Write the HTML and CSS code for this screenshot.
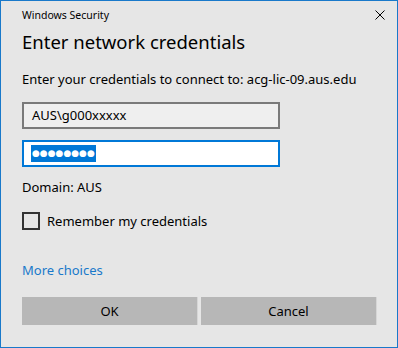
FILE: index.html
```html
<!DOCTYPE html>
<html>
<head>
<meta charset="utf-8">
<link rel="stylesheet" href="styles.css">
</head>
<body>
<div class="window">
  <div class="titlebar">
    <span class="caption">Windows Security</span>
    <svg class="close" width="10" height="10" viewBox="0 0 10 10"><path d="M0.5 0.5 L9.5 9.5 M9.5 0.5 L0.5 9.5" stroke="#000" stroke-width="1" fill="none"/></svg>
  </div>
  <div class="title">Enter network credentials</div>
  <div class="prompt">Enter your credentials to connect to: acg-lic-09.aus.edu</div>
  <div class="field user">AUS\g000xxxxx</div>
  <div class="field pass"><span class="sel">●●●●●●●●</span></div>
  <div class="domain">Domain: AUS</div>
  <label class="check-row"><span class="box"></span><span>Remember my credentials</span></label>
  <a class="more">More choices</a>
  <div class="buttons">
    <div class="btn">OK</div>
    <div class="btn">Cancel</div>
  </div>
</div>
</body>
</html>
```

FILE: styles.css
```css
html, body {
  margin: 0;
  padding: 0;
}
body {
  font-family: "Segoe UI", "Noto Sans", sans-serif;
  color: #000;
}
.window {
  width: 398px;
  height: 348px;
  box-sizing: border-box;
  border: 1px solid #1979CA;
  background: #E6E6E6;
  padding: 0 20px 0 21px;
  display: flex;
  flex-direction: column;
}
.titlebar {
  height: 28px;
  display: flex;
  align-items: center;
  justify-content: space-between;
  margin-right: -8px;
}
.caption {
  font-size: 10.5px;
  line-height: 14px;
}
.close {
  display: block;
}
.title {
  font-size: 18.5px;
  line-height: 26px;
}
.prompt {
  margin-top: 15px;
  font-size: 13px;
  line-height: 18px;
}
.field {
  width: 258px;
  height: 27px;
  box-sizing: border-box;
  border: 2px solid #7A7A7A;
  background: #EFEFEF;
  font-size: 13px;
  line-height: 23px;
  padding-left: 8px;
}
.user {
  margin-top: 14px;
}
.pass {
  margin-top: 11px;
  border-color: #0078D7;
  background: #fff;
  padding-left: 7px;
  display: flex;
  align-items: center;
}
.sel {
  background: #0078D7;
  color: #fff;
  font-family: "DejaVu Sans", sans-serif;
  font-size: 9px;
  line-height: 17px;
  letter-spacing: 0;
  padding: 0 1px;
}
.domain {
  margin-top: 11px;
  font-size: 13px;
  line-height: 18px;
}
.check-row {
  margin-top: 16px;
  display: flex;
  align-items: center;
  gap: 7px;
  font-size: 13px;
  line-height: 18px;
}
.box {
  width: 18px;
  height: 18px;
  box-sizing: border-box;
  border: 2px solid #333;
}
.more {
  margin-top: 31px;
  font-size: 13px;
  line-height: 18px;
  color: #1979CA;
  align-self: flex-start;
}
.buttons {
  margin-top: 18px;
  display: flex;
  gap: 3px;
}
.btn {
  width: 176px;
  height: 28px;
  box-sizing: border-box;
  background: #B7B7B7;
  border-right: 1px solid #D6D6D6;
  font-size: 13px;
  display: flex;
  align-items: center;
  justify-content: center;
}
```
